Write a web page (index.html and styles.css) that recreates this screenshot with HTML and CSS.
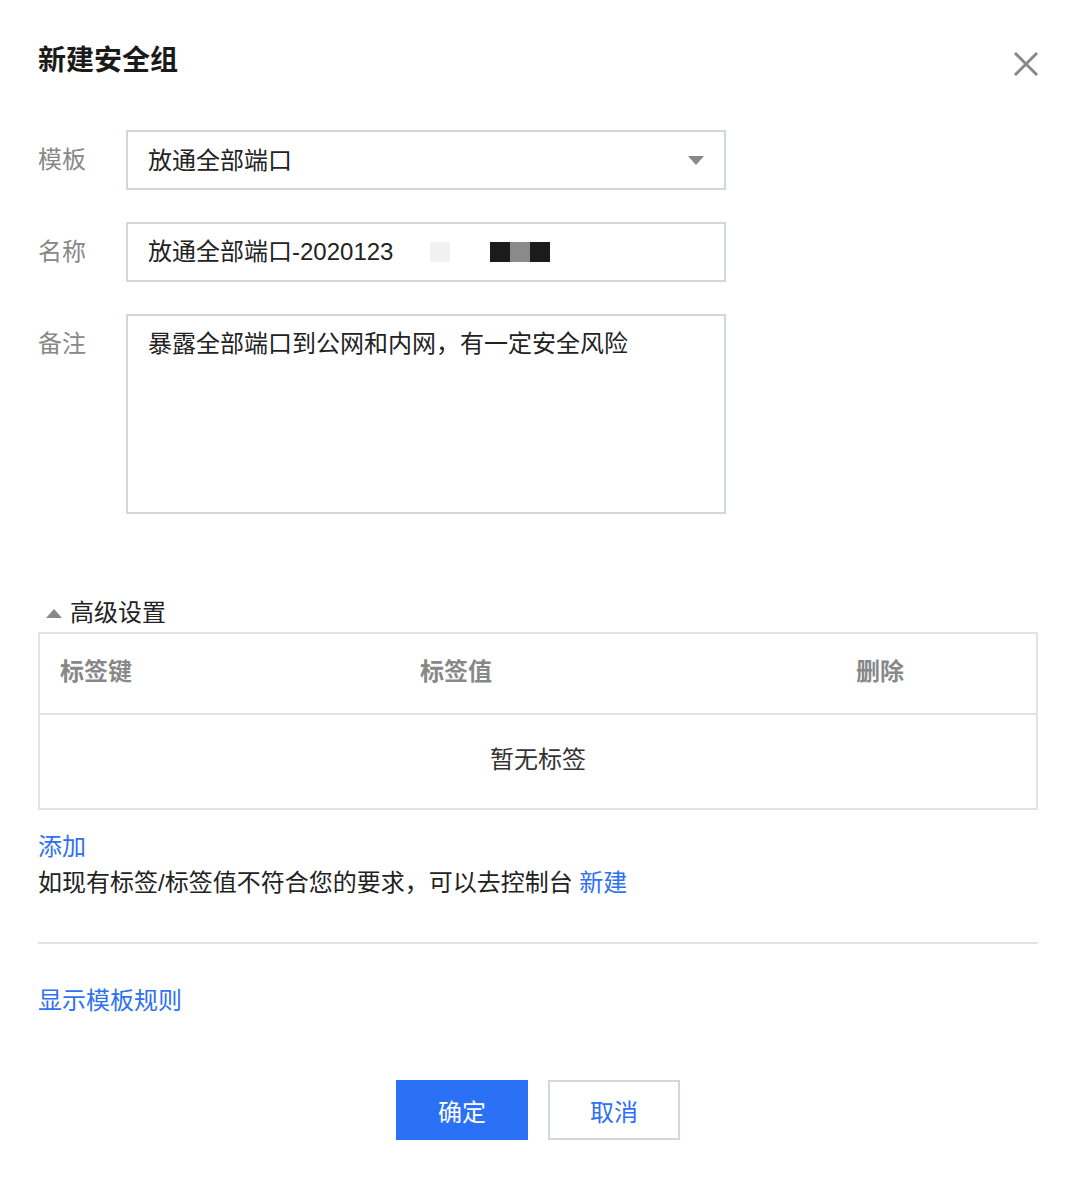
FILE: index.html
```html
<!DOCTYPE html>
<html lang="zh-CN">
<head>
<meta charset="utf-8">
<title>新建安全组</title>
<link rel="stylesheet" href="styles.css">
</head>
<body>
<div class="dialog">
  <div class="header">
    <h1 class="title">新建安全组</h1>
    <button class="close" aria-label="关闭">
      <svg width="26" height="26" viewBox="0 0 26 26"><path d="M2 2L24 24M24 2L2 24" stroke="#888" stroke-width="3" fill="none"/></svg>
    </button>
  </div>

  <div class="form">
    <div class="row">
      <label class="label">模板</label>
      <div class="field select">
        <span>放通全部端口</span>
        <span class="caret"></span>
      </div>
    </div>
    <div class="row">
      <label class="label">名称</label>
      <div class="field">
        <span>放通全部端口-2020123</span>
        <span class="mask light"></span>
        <span class="mask-group"><span class="mask dark"></span><span class="mask mid"></span><span class="mask dark"></span></span>
      </div>
    </div>
    <div class="row row-top">
      <label class="label">备注</label>
      <div class="field textarea">暴露全部端口到公网和内网，有一定安全风险</div>
    </div>
  </div>

  <div class="advanced">
    <span class="tri"></span>
    <span>高级设置</span>
  </div>

  <div class="table">
    <div class="thead">
      <div class="th">标签键</div>
      <div class="th">标签值</div>
      <div class="th">删除</div>
    </div>
    <div class="empty">暂无标签</div>
  </div>

  <div class="line"><a class="link">添加</a></div>
  <div class="line">如现有标签/标签值不符合您的要求，可以去控制台 <a class="link">新建</a></div>

  <div class="divider"></div>

  <div class="line rules"><a class="link">显示模板规则</a></div>

  <div class="actions">
    <button class="btn primary">确定</button>
    <button class="btn default">取消</button>
  </div>
</div>
</body>
</html>
```

FILE: styles.css
```css
* { box-sizing: border-box; }
html, body { margin: 0; padding: 0; background: #fff; }
body {
  font-family: "Liberation Sans", "Noto Sans CJK SC", sans-serif;
  color: #222;
  font-size: 24px;
}
.dialog {
  width: 1078px;
  padding: 40px 41px 0 38px;
}
.header {
  display: flex;
  align-items: center;
  justify-content: space-between;
  height: 42px;
}
.title {
  margin: 0;
  font-size: 28px;
  font-weight: bold;
  line-height: 42px;
  color: #1a1a1a;
}
.close {
  border: 0;
  background: none;
  padding: 0;
  margin: 6px -2px 0 0;
  width: 26px;
  height: 26px;
  display: flex;
}
.form {
  margin-top: 48px;
  display: flex;
  flex-direction: column;
  gap: 32px;
}
.row {
  display: flex;
  align-items: center;
}
.row-top { align-items: flex-start; }
.label {
  width: 88px;
  color: #888;
  line-height: 60px;
}
.field {
  width: 600px;
  height: 60px;
  border: 2px solid #d2d6de;
  display: flex;
  align-items: center;
  padding: 0 20px;
  line-height: 32px;
}
.select { justify-content: space-between; padding-top: 2px; }
.caret {
  width: 0; height: 0;
  border-left: 8px solid transparent;
  border-right: 8px solid transparent;
  border-top: 9px solid #888;
  margin-top: -2px;
}
.mask { display: inline-block; width: 20px; height: 20px; }
.mask.light { background: #f1f1f1; margin-left: 37px; }
.mask-group { display: inline-flex; margin-left: 40px; }
.mask.dark { background: #1b1b1b; }
.mask.mid { background: #8a8a8a; }
.textarea {
  height: 200px;
  align-items: flex-start;
  padding-top: 12px;
}
.advanced {
  margin-top: 83px;
  display: flex;
  align-items: center;
  gap: 8px;
  height: 32px;
  line-height: 32px;
  color: #222;
}
.tri {
  margin-left: 8px;
  width: 0; height: 0;
  border-left: 8px solid transparent;
  border-right: 8px solid transparent;
  border-bottom: 9px solid #888;
}
.table {
  margin-top: 3px;
  border: 2px solid #e2e2e2;
  width: 1000px;
}
.thead {
  display: grid;
  grid-template-columns: 360px 436px 1fr;
  height: 81px;
  border-bottom: 2px solid #e2e2e2;
  align-items: center;
  padding-bottom: 8px;
}
.th {
  padding-left: 20px;
  font-weight: bold;
  color: #888;
}
.empty {
  height: 93px;
  display: flex;
  align-items: center;
  justify-content: center;
  color: #333;
  padding-bottom: 8px;
}
.line {
  line-height: 36px;
}
.table + .line { margin-top: 19px; }
.link { color: #2e71f2; text-decoration: none; }
.divider {
  margin-top: 41px;
  height: 2px;
  width: 1000px;
  background: #e2e2e2;
}
.rules { margin-top: 39px; }
.actions {
  margin-top: 61px;
  display: flex;
  justify-content: center;
  gap: 20px;
  width: 1000px;
}
.btn {
  width: 132px;
  height: 60px;
  font-family: inherit;
  font-size: 24px;
  padding: 0;
}
.primary {
  background: #2a71f6;
  color: #fff;
  border: 0;
}
.default {
  background: #fff;
  color: #2e71f2;
  border: 2px solid #d2d6de;
}
```
